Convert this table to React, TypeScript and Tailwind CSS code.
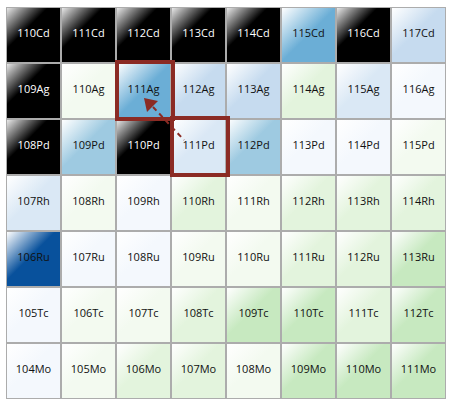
import React from 'react';

type Tone = 'k' | 'bd' | 'b5' | 'b4' | 'b3' | 'b2' | 'b1' | 'g0' | 'g1' | 'g2';

const tones: Record<Tone, string> = {
  k: 'bg-[linear-gradient(135deg,#e8e8e8_0%,#000000_38%)] text-white',
  bd: 'bg-[linear-gradient(135deg,#ffffff_0%,#08519c_45%)] text-[#111]',
  b5: 'bg-[linear-gradient(135deg,#ffffff_0%,#6baed6_50%)] text-[#111]',
  b4: 'bg-[linear-gradient(135deg,#ffffff_0%,#9ecae1_45%)] text-[#111]',
  b3: 'bg-[linear-gradient(135deg,#ffffff_0%,#c6dbef_45%)] text-[#111]',
  b2: 'bg-[linear-gradient(135deg,#ffffff_0%,#dae8f5_45%)] text-[#111]',
  b1: 'bg-[linear-gradient(135deg,#ffffff_0%,#f4f8fd_45%)] text-[#111]',
  g0: 'bg-[linear-gradient(135deg,#ffffff_0%,#f3faf0_45%)] text-[#111]',
  g1: 'bg-[linear-gradient(135deg,#ffffff_0%,#e3f4dd_45%)] text-[#111]',
  g2: 'bg-[linear-gradient(135deg,#ffffff_0%,#c7e9c0_45%)] text-[#111]',
};

// each row: element symbol, first mass number, tones left to right
const rows: { el: string; start: number; cells: Tone[] }[] = [
  { el: 'Cd', start: 110, cells: ['k', 'k', 'k', 'k', 'k', 'b5', 'k', 'b3'] },
  { el: 'Ag', start: 109, cells: ['k', 'g0', 'b5', 'b3', 'b3', 'g1', 'b2', 'b1'] },
  { el: 'Pd', start: 108, cells: ['k', 'b4', 'k', 'b2', 'b4', 'b1', 'b1', 'g0'] },
  { el: 'Rh', start: 107, cells: ['b2', 'g0', 'b1', 'g1', 'g0', 'g1', 'g1', 'g1'] },
  { el: 'Ru', start: 106, cells: ['bd', 'b1', 'b1', 'g0', 'g0', 'g1', 'g1', 'g2'] },
  { el: 'Tc', start: 105, cells: ['b1', 'g0', 'g0', 'g1', 'g2', 'g2', 'g1', 'g2'] },
  { el: 'Mo', start: 104, cells: ['b1', 'g0', 'g1', 'g1', 'g0', 'g2', 'g2', 'g2'] },
];

function Nuclide({ label, tone }: { label: string; tone: Tone }) {
  return (
    <div className={`flex h-[54px] w-[53px] items-center justify-center pb-[5px] ${tones[tone]}`}>
      <span className="text-[11px] leading-none">{label}</span>
    </div>
  );
}

export default function App() {
  return (
    <div className="relative h-[408px] w-[455px] overflow-hidden bg-white font-['Open_Sans','Noto_Sans',sans-serif]">
      <div className="ml-[6px] mt-[7px] grid w-max grid-cols-[repeat(8,53px)] gap-[2px] bg-[#acacac] p-px">
        {rows.map((row) =>
          row.cells.map((tone, i) => (
            <Nuclide key={`${row.el}${i}`} label={`${row.start + i}${row.el}`} tone={tone} />
          )),
        )}
      </div>

      {/* highlighted parent / daughter */}
      <div className="absolute left-[115px] top-[60px] h-[61px] w-[60px] border-4 border-[#8b2b24]" />
      <div className="absolute left-[170px] top-[116px] h-[61px] w-[60px] border-4 border-[#8b2b24]" />

      <svg className="absolute left-0 top-0" width="455" height="408" viewBox="0 0 455 408">
        <line x1="153" y1="107" x2="184" y2="140" stroke="#8b2b24" strokeWidth="2" strokeDasharray="5 4" />
        <polygon points="144,98 158,101 147,112" fill="#8b2b24" />
      </svg>
    </div>
  );
}
